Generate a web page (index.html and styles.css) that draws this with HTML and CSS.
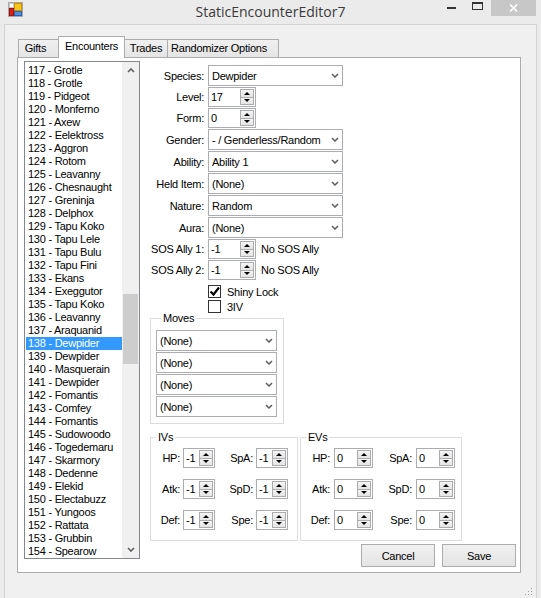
FILE: index.html
```html
<!DOCTYPE html>
<html lang="en">
<head>
  <meta charset="UTF-8">
  <title>StaticEncounterEditor7</title>
  <link rel="stylesheet" href="styles.css">
</head>
<body>
  <div class="window">
    <div class="titlebar">
      <svg class="app-icon" width="16" height="16" viewBox="0 0 16 16">
        <rect x="0.5" y="0.5" width="14" height="14" fill="#e4e4e4" stroke="#a8a8a8"/>
        <rect x="1.5" y="1.5" width="4" height="4" fill="#fff" stroke="#c8c8c8"/>
        <rect x="6.5" y="1.5" width="7" height="7" fill="#f6c619" stroke="#d48f00"/>
        <rect x="1.5" y="6.5" width="4" height="7" fill="#d8231b" stroke="#9a1510"/>
        <rect x="6.5" y="9.5" width="7" height="4" fill="#4f8ee0" stroke="#2b62b0"/>
      </svg>
      <div class="title">StaticEncounterEditor7</div>
      <div class="controls">
        <div class="ctl ctl-min"><svg width="9" height="2"><rect width="9" height="2" fill="#333"/></svg></div>
        <div class="ctl ctl-max"><svg width="11" height="8"><rect x="0.5" y="0.5" width="10" height="7" fill="none" stroke="#333"/><rect x="0" y="0" width="11" height="2" fill="#333"/></svg></div>
        <div class="ctl ctl-close"><svg width="9" height="8"><path d="M1 0.5l7 7M8 0.5l-7 7" stroke="#fff" stroke-width="1.6"/></svg></div>
      </div>
    </div>

    <div class="client">
      <div class="tabs">
        <div class="tab tab-gifts">Gifts</div>
        <div class="tab tab-enc active">Encounters</div>
        <div class="tab tab-trades">Trades</div>
        <div class="tab tab-rand">Randomizer Options</div>
      </div>

      <div class="tabpage">
        <div class="list">
          <div class="items">
            <div class="item">117 - Grotle</div>
            <div class="item">118 - Grotle</div>
            <div class="item">119 - Pidgeot</div>
            <div class="item">120 - Monferno</div>
            <div class="item">121 - Axew</div>
            <div class="item">122 - Eelektross</div>
            <div class="item">123 - Aggron</div>
            <div class="item">124 - Rotom</div>
            <div class="item">125 - Leavanny</div>
            <div class="item">126 - Chesnaught</div>
            <div class="item">127 - Greninja</div>
            <div class="item">128 - Delphox</div>
            <div class="item">129 - Tapu Koko</div>
            <div class="item">130 - Tapu Lele</div>
            <div class="item">131 - Tapu Bulu</div>
            <div class="item">132 - Tapu Fini</div>
            <div class="item">133 - Ekans</div>
            <div class="item">134 - Exeggutor</div>
            <div class="item">135 - Tapu Koko</div>
            <div class="item">136 - Leavanny</div>
            <div class="item">137 - Araquanid</div>
            <div class="item selected">138 - Dewpider</div>
            <div class="item">139 - Dewpider</div>
            <div class="item">140 - Masquerain</div>
            <div class="item">141 - Dewpider</div>
            <div class="item">142 - Fomantis</div>
            <div class="item">143 - Comfey</div>
            <div class="item">144 - Fomantis</div>
            <div class="item">145 - Sudowoodo</div>
            <div class="item">146 - Togedemaru</div>
            <div class="item">147 - Skarmory</div>
            <div class="item">148 - Dedenne</div>
            <div class="item">149 - Elekid</div>
            <div class="item">150 - Electabuzz</div>
            <div class="item">151 - Yungoos</div>
            <div class="item">152 - Rattata</div>
            <div class="item">153 - Grubbin</div>
            <div class="item">154 - Spearow</div>
          </div>
          <div class="scrollbar">
            <div class="sb-btn"><svg width="8" height="5"><path d="M1 4l3-3 3 3" stroke="#606060" stroke-width="1.6" fill="none"/></svg></div>
            <div class="sb-track">
              <div class="sb-thumb"></div>
            </div>
            <div class="sb-btn"><svg width="8" height="5"><path d="M1 1l3 3 3-3" stroke="#606060" stroke-width="1.6" fill="none"/></svg></div>
          </div>
        </div>

        <div class="editor">
          <div class="form">
            <label>Species:</label>
            <div class="combo combo-wide"><span>Dewpider</span><svg width="8" height="5"><path d="M1 1l3 3 3-3" stroke="#5d5d5d" stroke-width="1.5" fill="none"/></svg></div>

            <label>Level:</label>
            <div class="spin spin-form"><span class="val">17</span><span class="btns"><span class="up"></span><span class="down"></span></span></div>

            <label>Form:</label>
            <div class="spin spin-form"><span class="val">0</span><span class="btns"><span class="up"></span><span class="down"></span></span></div>

            <label>Gender:</label>
            <div class="combo combo-wide"><span>- / Genderless/Random</span><svg width="8" height="5"><path d="M1 1l3 3 3-3" stroke="#5d5d5d" stroke-width="1.5" fill="none"/></svg></div>

            <label>Ability:</label>
            <div class="combo combo-wide"><span>Ability 1</span><svg width="8" height="5"><path d="M1 1l3 3 3-3" stroke="#5d5d5d" stroke-width="1.5" fill="none"/></svg></div>

            <label>Held Item:</label>
            <div class="combo combo-wide"><span>(None)</span><svg width="8" height="5"><path d="M1 1l3 3 3-3" stroke="#5d5d5d" stroke-width="1.5" fill="none"/></svg></div>

            <label>Nature:</label>
            <div class="combo combo-wide"><span>Random</span><svg width="8" height="5"><path d="M1 1l3 3 3-3" stroke="#5d5d5d" stroke-width="1.5" fill="none"/></svg></div>

            <label>Aura:</label>
            <div class="combo combo-wide"><span>(None)</span><svg width="8" height="5"><path d="M1 1l3 3 3-3" stroke="#5d5d5d" stroke-width="1.5" fill="none"/></svg></div>

            <label>SOS Ally 1:</label>
            <div class="spin-row">
              <div class="spin spin-form"><span class="val">-1</span><span class="btns"><span class="up"></span><span class="down"></span></span></div>
              <span class="note">No SOS Ally</span>
            </div>

            <label>SOS Ally 2:</label>
            <div class="spin-row">
              <div class="spin spin-form"><span class="val">-1</span><span class="btns"><span class="up"></span><span class="down"></span></span></div>
              <span class="note">No SOS Ally</span>
            </div>
          </div>

          <div class="checks">
            <div class="check"><span class="box"><svg width="11" height="11"><path d="M1.5 5.5l3 3 5.5-7" stroke="#000" stroke-width="2.2" fill="none"/></svg></span>Shiny Lock</div>
            <div class="check"><span class="box"></span>3IV</div>
          </div>

          <div class="group moves">
            <div class="group-title">Moves</div>
            <div class="moves-list">
              <div class="combo"><span>(None)</span><svg width="8" height="5"><path d="M1 1l3 3 3-3" stroke="#5d5d5d" stroke-width="1.5" fill="none"/></svg></div>
              <div class="combo"><span>(None)</span><svg width="8" height="5"><path d="M1 1l3 3 3-3" stroke="#5d5d5d" stroke-width="1.5" fill="none"/></svg></div>
              <div class="combo"><span>(None)</span><svg width="8" height="5"><path d="M1 1l3 3 3-3" stroke="#5d5d5d" stroke-width="1.5" fill="none"/></svg></div>
              <div class="combo"><span>(None)</span><svg width="8" height="5"><path d="M1 1l3 3 3-3" stroke="#5d5d5d" stroke-width="1.5" fill="none"/></svg></div>
            </div>
          </div>

          <div class="stats">
            <div class="group ivs">
              <div class="group-title">IVs</div>
              <div class="stat-grid">
                <label>HP:</label>
                <div class="spin"><span class="val">-1</span><span class="btns"><span class="up"></span><span class="down"></span></span></div>
                <label>SpA:</label>
                <div class="spin"><span class="val">-1</span><span class="btns"><span class="up"></span><span class="down"></span></span></div>
                <label>Atk:</label>
                <div class="spin"><span class="val">-1</span><span class="btns"><span class="up"></span><span class="down"></span></span></div>
                <label>SpD:</label>
                <div class="spin"><span class="val">-1</span><span class="btns"><span class="up"></span><span class="down"></span></span></div>
                <label>Def:</label>
                <div class="spin"><span class="val">-1</span><span class="btns"><span class="up"></span><span class="down"></span></span></div>
                <label>Spe:</label>
                <div class="spin"><span class="val">-1</span><span class="btns"><span class="up"></span><span class="down"></span></span></div>
              </div>
            </div>

            <div class="group evs">
              <div class="group-title">EVs</div>
              <div class="stat-grid">
                <label>HP:</label>
                <div class="spin"><span class="val">0</span><span class="btns"><span class="up"></span><span class="down"></span></span></div>
                <label>SpA:</label>
                <div class="spin"><span class="val">0</span><span class="btns"><span class="up"></span><span class="down"></span></span></div>
                <label>Atk:</label>
                <div class="spin"><span class="val">0</span><span class="btns"><span class="up"></span><span class="down"></span></span></div>
                <label>SpD:</label>
                <div class="spin"><span class="val">0</span><span class="btns"><span class="up"></span><span class="down"></span></span></div>
                <label>Def:</label>
                <div class="spin"><span class="val">0</span><span class="btns"><span class="up"></span><span class="down"></span></span></div>
                <label>Spe:</label>
                <div class="spin"><span class="val">0</span><span class="btns"><span class="up"></span><span class="down"></span></span></div>
              </div>
            </div>
          </div>

          <div class="actions">
            <button class="btn">Cancel</button>
            <button class="btn">Save</button>
          </div>
        </div>
      </div>

      <svg class="grip" width="9" height="9" viewBox="0 0 9 9">
        <rect x="7" y="1" width="1" height="1" fill="#a0a0a0"/>
        <rect x="4" y="4" width="1" height="1" fill="#a0a0a0"/>
        <rect x="7" y="4" width="1" height="1" fill="#a0a0a0"/>
        <rect x="1" y="7" width="1" height="1" fill="#a0a0a0"/>
        <rect x="4" y="7" width="1" height="1" fill="#a0a0a0"/>
        <rect x="7" y="7" width="1" height="1" fill="#a0a0a0"/>
      </svg>
    </div>
  </div>
</body>
</html>
```

FILE: styles.css
```css
* {
  box-sizing: border-box;
}

body {
  margin: 0;
  font-family: "Liberation Sans", Arial, sans-serif;
  font-size: 11px;
  letter-spacing: -0.25px;
  color: #000;
  background: #ebebeb;
}

.window {
  width: 541px;
  height: 598px;
  background: #ebebeb;
  display: flex;
  flex-direction: column;
  overflow: hidden;
}

/* title bar */
.titlebar {
  height: 24px;
  flex: none;
  display: grid;
  grid-template-columns: 1fr auto 1fr;
  align-items: start;
}

.app-icon {
  margin: 2px 0 0 8px;
}

.title {
  font-family: "Open Sans", "Noto Sans", sans-serif;
  font-size: 14px;
  letter-spacing: 0;
  line-height: 24px;
  color: #3a3a3a;
}

.controls {
  display: flex;
  justify-content: flex-end;
  margin-right: 5px;
}

.ctl {
  height: 16px;
  display: flex;
  justify-content: center;
}

.ctl-min {
  width: 26px;
  padding-top: 7px;
}

.ctl-max {
  width: 27px;
  padding-top: 2px;
}

.ctl-close {
  width: 45px;
  background: #c7c7c7;
  padding-top: 4px;
}

/* client area */
.client {
  flex: 1;
  margin: 0 4px;
  border: 1px solid #d3d3d3;
  border-bottom: 0;
  background: #f0f0f0;
  padding-top: 11px;
  display: flex;
  flex-direction: column;
}

.tabs {
  display: flex;
  align-items: flex-end;
  height: 21px;
  margin-left: 13px;
}

.tab {
  height: 18px;
  line-height: 16px;
  border: 1px solid #acacac;
  border-bottom: 0;
  background: linear-gradient(#f0f0f0, #e5e5e5);
  text-align: center;
  white-space: nowrap;
  margin-left: -1px;
}

.tab-gifts { width: 41px; margin-left: 0; padding-right: 6px; }
.tab-enc { width: 67px; }
.tab-trades { width: 44px; }
.tab-rand { width: 112px; padding-right: 8px; }

.tab.active {
  height: 22px;
  line-height: 18px;
  margin-bottom: -1px;
  background: #fff;
  position: relative;
  z-index: 1;
}

.tabpage {
  margin-left: 12px;
  width: 504px;
  height: 516px;
  border: 1px solid #acacac;
  background: #fff;
  display: flex;
  padding: 3px 0 0 6px;
}

/* list box */
.list {
  width: 116px;
  height: 498px;
  border: 1px solid #828790;
  display: flex;
}

.items {
  flex: 1;
  padding: 2px 0 0 1px;
}

.item {
  height: 13px;
  line-height: 13px;
  padding-left: 2px;
  white-space: nowrap;
}

.item.selected {
  background: #3399ff;
  color: #fff;
}

.scrollbar {
  width: 17px;
  display: flex;
  flex-direction: column;
  background: #f0f0f0;
}

.sb-btn {
  height: 17px;
  display: flex;
  align-items: center;
  justify-content: center;
}

.sb-track {
  flex: 1;
  padding-top: 215px;
}

.sb-thumb {
  height: 70px;
  margin: 0 1px;
  background: #cdcdcd;
}

/* editor */
.editor {
  flex: 1;
  margin-left: 6px;
  padding-top: 4px;
  display: flex;
  flex-direction: column;
}

.form {
  display: grid;
  grid-template-columns: 58px auto;
  column-gap: 4px;
  row-gap: 1px;
  align-items: center;
  justify-items: start;
}

.form label {
  justify-self: end;
  white-space: nowrap;
}

.combo {
  height: 21px;
  width: 121px;
  border: 1px solid #abadb3;
  background: #fff;
  display: flex;
  align-items: center;
  justify-content: space-between;
  padding: 0 3px 0 3px;
  white-space: nowrap;
}

.combo-wide {
  width: 135px;
}

.spin {
  height: 20px;
  width: 32px;
  border: 1px solid #abadb3;
  background: #fff;
  display: flex;
}

.spin-form {
  width: 48px;
}

.spin .val {
  flex: 1;
  line-height: 18px;
  padding-left: 2px;
}

.btns {
  width: 14px;
  margin: 1px 1px 1px 0;
  display: flex;
  flex-direction: column;
}

.btns span {
  flex: 1;
  border: 1px solid #acacac;
  background: linear-gradient(#f4f4f4, #e4e4e4);
  display: flex;
  align-items: center;
  justify-content: center;
}

.btns .down {
  border-top: 0;
}

.btns .up::before {
  content: "";
  border-left: 3px solid transparent;
  border-right: 3px solid transparent;
  border-bottom: 3px solid #000;
}

.btns .down::before {
  content: "";
  border-left: 3px solid transparent;
  border-right: 3px solid transparent;
  border-top: 3px solid #000;
}

.spin-row {
  display: flex;
  align-items: center;
  gap: 5px;
}

.checks {
  margin: 5px 0 0 62px;
  display: flex;
  flex-direction: column;
  gap: 2px;
}

.check {
  display: flex;
  align-items: center;
  gap: 6px;
  height: 13px;
}

.check .box {
  width: 13px;
  height: 13px;
  border: 1px solid #333;
  background: #fff;
  display: flex;
  align-items: center;
  justify-content: center;
}

/* group boxes */
.group {
  border: 1px solid #dcdcdc;
}

.group-title {
  display: table;
  margin: -7px 0 0 5px;
  padding: 0 2px;
  line-height: 13px;
  background: #fff;
}

.moves {
  width: 134px;
  height: 106px;
  margin: 5px 0 0 4px;
  padding: 0 6px 0 5px;
}

.moves-list {
  margin-top: 5px;
  display: flex;
  flex-direction: column;
  gap: 1px;
}

.stats {
  display: flex;
  margin: 13px 0 0 4px;
  gap: 2px;
}

.ivs {
  width: 148px;
  height: 104px;
}

.evs {
  width: 162px;
  height: 104px;
}

.stat-grid {
  display: grid;
  grid-template-columns: 29px 32px 35px 32px;
  column-gap: 3px;
  row-gap: 11px;
  align-items: center;
  margin-top: 4px;
}

.evs .stat-grid {
  grid-template-columns: 29px 39px 35px 39px;
  column-gap: 4px;
}

.evs .spin {
  width: 39px;
}

.stat-grid label {
  text-align: right;
}

.actions {
  display: flex;
  justify-content: flex-end;
  gap: 7px;
  margin-top: 3px;
  padding-right: 4px;
}

.btn {
  width: 74px;
  height: 23px;
  border: 1px solid #acacac;
  background: linear-gradient(#f0f0f0, #e5e5e5);
  font-family: "Liberation Sans", Arial, sans-serif;
  font-size: 11px;
  letter-spacing: -0.25px;
  color: #000;
  padding: 0;
}

.grip {
  margin: auto 3px 2px auto;
}
```
